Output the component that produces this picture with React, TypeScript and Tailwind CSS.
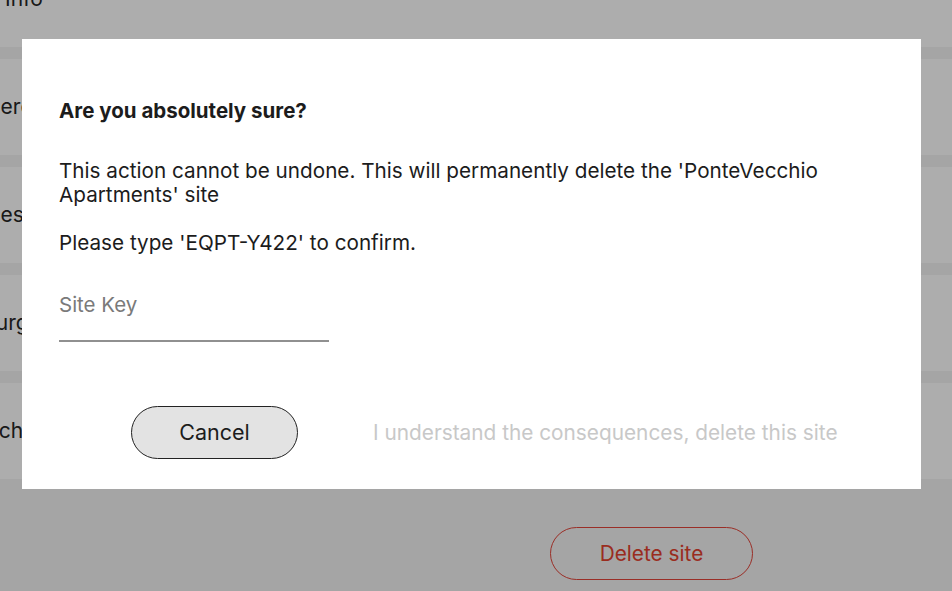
import { useState } from "react";

const rows = [
  { id: "r0", label: "Info", offset: "ml-[5px]" },
  { id: "r1", label: "Hercules", offset: "-ml-[15px]" },
  { id: "r2", label: "Hesse", offset: "-ml-[15px]" },
  { id: "r3", label: "Burgas", offset: "-ml-[18px]" },
  { id: "r4", label: "Ichenhausen", offset: "-ml-[7px]" },
];

export default function App() {
  const [siteKey, setSiteKey] = useState("");
  const confirmed = siteKey === "EQPT-Y422";

  return (
    <div className="relative w-[952px] h-[591px] overflow-hidden bg-[#f3f3f3] font-['Inter',sans-serif] text-[#262626]">
      {/* page behind the dialog */}
      <div className="flex flex-col gap-[12px] -mt-[49px]">
        {rows.map((r) => (
          <div key={r.id} className="h-[96px] bg-white flex items-center">
            <span className={`${r.offset} text-[21px] whitespace-nowrap`}>{r.label}</span>
          </div>
        ))}
      </div>
      <button className="mt-[48px] ml-[550px] w-[203px] h-[53px] rounded-full border border-[#e4453a] text-[#e4412f] text-[20.8px]">
        Delete site
      </button>

      {/* overlay + dialog */}
      <div className="absolute inset-0 bg-black/[0.32]">
        <div className="ml-[22px] mt-[39px] w-[899px] h-[450px] bg-white pt-[60px] pl-[37px] pr-[40px] text-[#1c1c1c]">
          <h2 className="text-[20.5px] leading-[24px] font-bold">Are you absolutely sure?</h2>
          <p className="mt-[36px] text-[20.7px] leading-[24px]">
            This action cannot be undone. This will permanently delete the 'PonteVecchio Apartments' site
          </p>
          <p className="mt-[24px] text-[20.7px] leading-[24px]">Please type 'EQPT-Y422' to confirm.</p>
          <input
            value={siteKey}
            onChange={(e) => setSiteKey(e.target.value)}
            placeholder="Site Key"
            className="mt-[27px] block w-[270px] h-[60px] pb-[14px] border-b-2 border-[#909090] text-[20.5px] outline-none placeholder:text-[#7a7a7a]"
          />
          <div className="mt-[64px] ml-[72px] flex items-center gap-[75px]">
            <button className="w-[167px] h-[53px] rounded-full bg-[#e3e3e3] border border-[#222] text-[21.5px] text-[#1c1c1c]">
              Cancel
            </button>
            <button
              disabled={!confirmed}
              className={`text-[20.8px] ${confirmed ? "text-[#e4412f]" : "text-[#c8c8c8]"}`}
            >
              I understand the consequences, delete this site
            </button>
          </div>
        </div>
      </div>
    </div>
  );
}
